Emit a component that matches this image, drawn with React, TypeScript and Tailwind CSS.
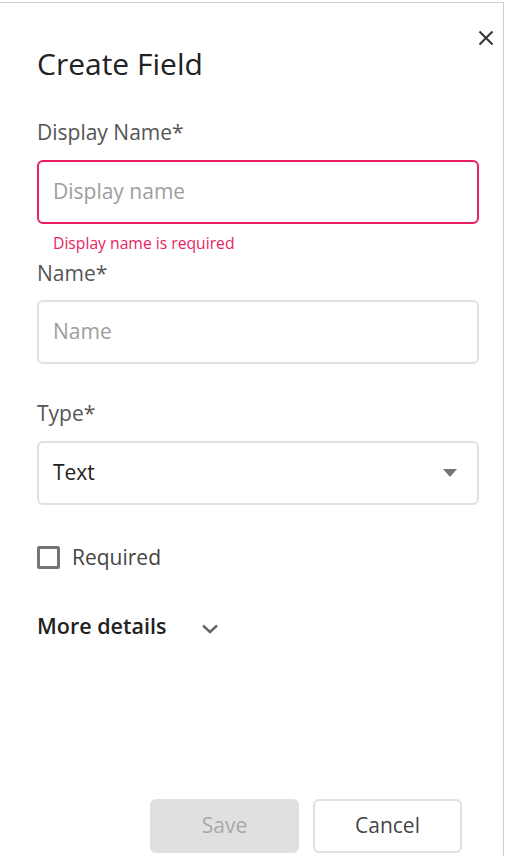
import React from "react";

export default function App() {
  return (
    <div className="w-[506px] h-[856px] bg-white overflow-hidden" style={{ fontFamily: '"Open Sans", sans-serif' }}>
      <div className="relative w-[504px] h-[856px] mt-[2px] border-t border-r border-[#cfcfcf] flex flex-col pl-[37px] pr-[24px]">
        <button className="absolute right-[5px] top-[23px] w-[24px] h-[24px] flex items-center justify-center text-[#333]">
          <svg width="16" height="16" viewBox="0 0 16 16" fill="none" stroke="currentColor" strokeWidth="2">
            <path d="M1.5 1.5 L14.5 14.5 M14.5 1.5 L1.5 14.5" />
          </svg>
        </button>
        <h1 className="mt-[41px] text-[30px] leading-[40px] text-[#222]">Create Field</h1>

        <label className="mt-[36px] text-[21px] leading-[24px] text-[#555]">Display Name*</label>
        <div className="mt-[16px] h-[64px] border-2 border-[#e91e63] rounded-[6px] flex items-center px-[14px]">
          <span className="text-[21px] text-[#9e9e9e]">Display name</span>
        </div>
        <div className="mt-[9px] pl-[16px] text-[15.7px] leading-[20px] text-[#e91e63]">Display name is required</div>

        <label className="mt-[8px] text-[21px] leading-[24px] text-[#555]">Name*</label>
        <div className="mt-[15px] h-[64px] border-2 border-[#e0e0e0] rounded-[6px] flex items-center px-[14px]">
          <span className="text-[21px] text-[#9e9e9e]">Name</span>
        </div>

        <label className="mt-[37px] text-[21px] leading-[24px] text-[#555]">Type*</label>
        <div className="mt-[16px] h-[64px] border-2 border-[#e0e0e0] rounded-[6px] flex items-center justify-between pl-[14px] pr-[20px]">
          <span className="text-[21px] text-[#222]">Text</span>
          <svg width="14" height="8" viewBox="0 0 14 8">
            <path d="M0 0 L14 0 L7 8 Z" fill="#757575" />
          </svg>
        </div>

        <div className="mt-[40px] flex items-center h-[24px]">
          <div className="w-[23px] h-[23px] border-[3px] border-[#757575] rounded-[2px]" />
          <span className="ml-[12px] text-[21px] leading-[24px] text-[#444]">Required</span>
        </div>

        <div className="mt-[43px] flex items-center h-[28px]">
          <span className="text-[21.5px] leading-[28px] font-semibold text-[#222]">More details</span>
          <svg className="ml-[35px] mt-[6px]" width="18" height="12" viewBox="0 0 18 12" fill="none" stroke="#666" strokeWidth="2.4">
            <path d="M2 2.5 L9 9 L16 2.5" />
          </svg>
        </div>

        <div className="mt-auto mb-[5px] flex justify-end gap-[14px] pr-[17px]">
          <button className="w-[149px] h-[54px] rounded-[6px] bg-[#e0e0e0] text-[21px] text-[#a8a8a8]">Save</button>
          <button className="w-[149px] h-[54px] rounded-[6px] border-2 border-[#e0e0e0] bg-white text-[21px] text-[#444]">Cancel</button>
        </div>
      </div>
    </div>
  );
}
